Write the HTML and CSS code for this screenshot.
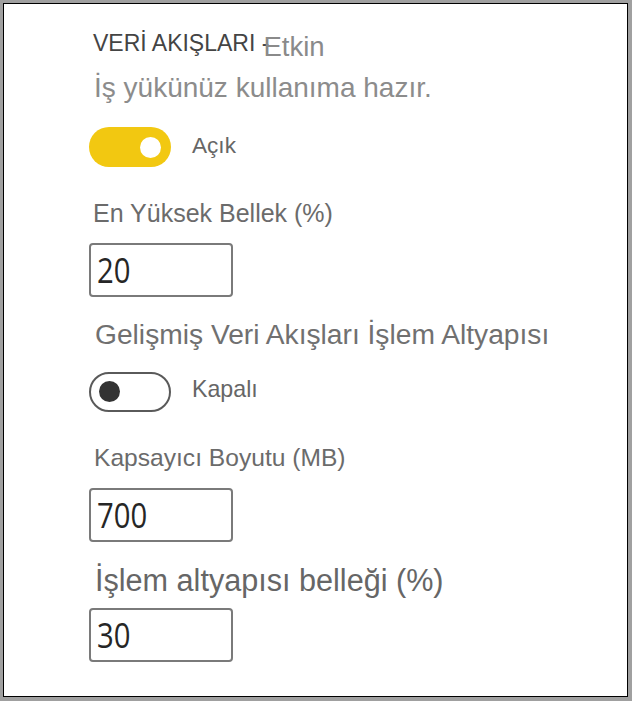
FILE: index.html
```html
<!DOCTYPE html>
<html lang="tr">
<head>
<meta charset="utf-8">
<title>Veri Akışları</title>
<link rel="stylesheet" href="styles.css">
</head>
<body>
<div class="frame">
  <div class="panel">
    <div class="title-row"><span class="title">VERİ AKIŞLARI -</span><span class="status">Etkin</span></div>
    <div class="ready">İş yükünüz kullanıma hazır.</div>

    <div class="toggle-row row-on">
      <span class="toggle toggle-on"><span class="knob"></span></span>
      <span class="toggle-label">Açık</span>
    </div>

    <div class="label label-mem">En Yüksek Bellek (%)</div>
    <div class="field"><span class="value">20</span></div>

    <div class="label label-adv">Gelişmiş Veri Akışları İşlem Altyapısı</div>

    <div class="toggle-row row-off">
      <span class="toggle toggle-off"><span class="knob"></span></span>
      <span class="toggle-label label-off">Kapalı</span>
    </div>

    <div class="label label-size">Kapsayıcı Boyutu (MB)</div>
    <div class="field"><span class="value">700</span></div>

    <div class="label label-engine">İşlem altyapısı belleği (%)</div>
    <div class="field field-last"><span class="value">30</span></div>
  </div>
</div>
</body>
</html>
```

FILE: styles.css
```css
* { box-sizing: border-box; }

html, body {
  margin: 0;
  height: 701px;
}

body {
  background: #a0a0a0;
  padding: 3px 4px 4px 3px;
  font-family: "Liberation Sans", Arial, sans-serif;
  overflow: hidden;
}

.frame {
  height: 694px;
  background: #ffffff;
  border: 1px solid #000000;
}

.panel {
  display: flex;
  flex-direction: column;
  align-items: flex-start;
  padding: 24px 0 0 85px;
}

.title-row {
  height: 30px;
  line-height: 30px;
  white-space: nowrap;
  padding-left: 4px;
}

.title {
  font-size: 23px;
  color: #444444;
}

.status {
  font-size: 27.5px;
  color: #8a8a8a;
  vertical-align: -5px;
  margin-left: -6px;
}

.ready {
  margin-top: 14.5px;
  padding-left: 5px;
  font-size: 28px;
  line-height: 30px;
  color: #8c8c8c;
  white-space: nowrap;
}

.toggle-row {
  display: flex;
  align-items: center;
  gap: 21px;
}

.row-on { margin-top: 24.5px; }
.row-off { margin-top: 22.5px; }

.toggle {
  position: relative;
  display: block;
  width: 82px;
  height: 40px;
  border-radius: 20px;
}

.toggle-on {
  background: #f2c811;
}

.toggle-off {
  background: #ffffff;
  border: 2px solid #5a5a5a;
}

.knob {
  position: absolute;
  top: 50%;
  width: 21px;
  height: 21px;
  margin-top: -10.5px;
  border-radius: 50%;
}

.toggle-on .knob {
  right: 10px;
  background: #ffffff;
}

.toggle-off .knob {
  left: 8px;
  background: #333333;
}

.toggle-label {
  font-size: 22.6px;
  line-height: 22px;
  color: #666666;
  margin-bottom: 3px;
}

.label-off {
  font-size: 23.2px;
  margin-bottom: 5px;
}

.label {
  line-height: 30px;
  color: #6b6b6b;
  padding-left: 4px;
  white-space: nowrap;
}

.label-mem { margin-top: 31.3px; font-size: 25px; }
.label-adv { margin-top: 22.5px; font-size: 28.2px; padding-left: 6px; color: #707070; }
.label-size { margin-top: 31.5px; font-size: 24.6px; padding-left: 5px; }
.label-engine {
  margin-top: 22.6px;
  font-size: 30.6px;
  padding-left: 6px;
  color: #666666;
}

.field {
  display: flex;
  align-items: center;
  width: 144px;
  height: 54px;
  margin-top: 14.7px;
  padding-left: 6px;
  border: 2px solid #7a7a7a;
  border-radius: 4px;
  background: #ffffff;
}

.field-last { margin-top: 13.4px; }

.value {
  display: inline-block;
  font-family: "Open Sans", "Noto Sans", sans-serif;
  font-weight: 400;
  font-size: 34px;
  line-height: 36px;
  color: #262626;
  transform: scaleX(0.86);
  transform-origin: left center;
}
```
